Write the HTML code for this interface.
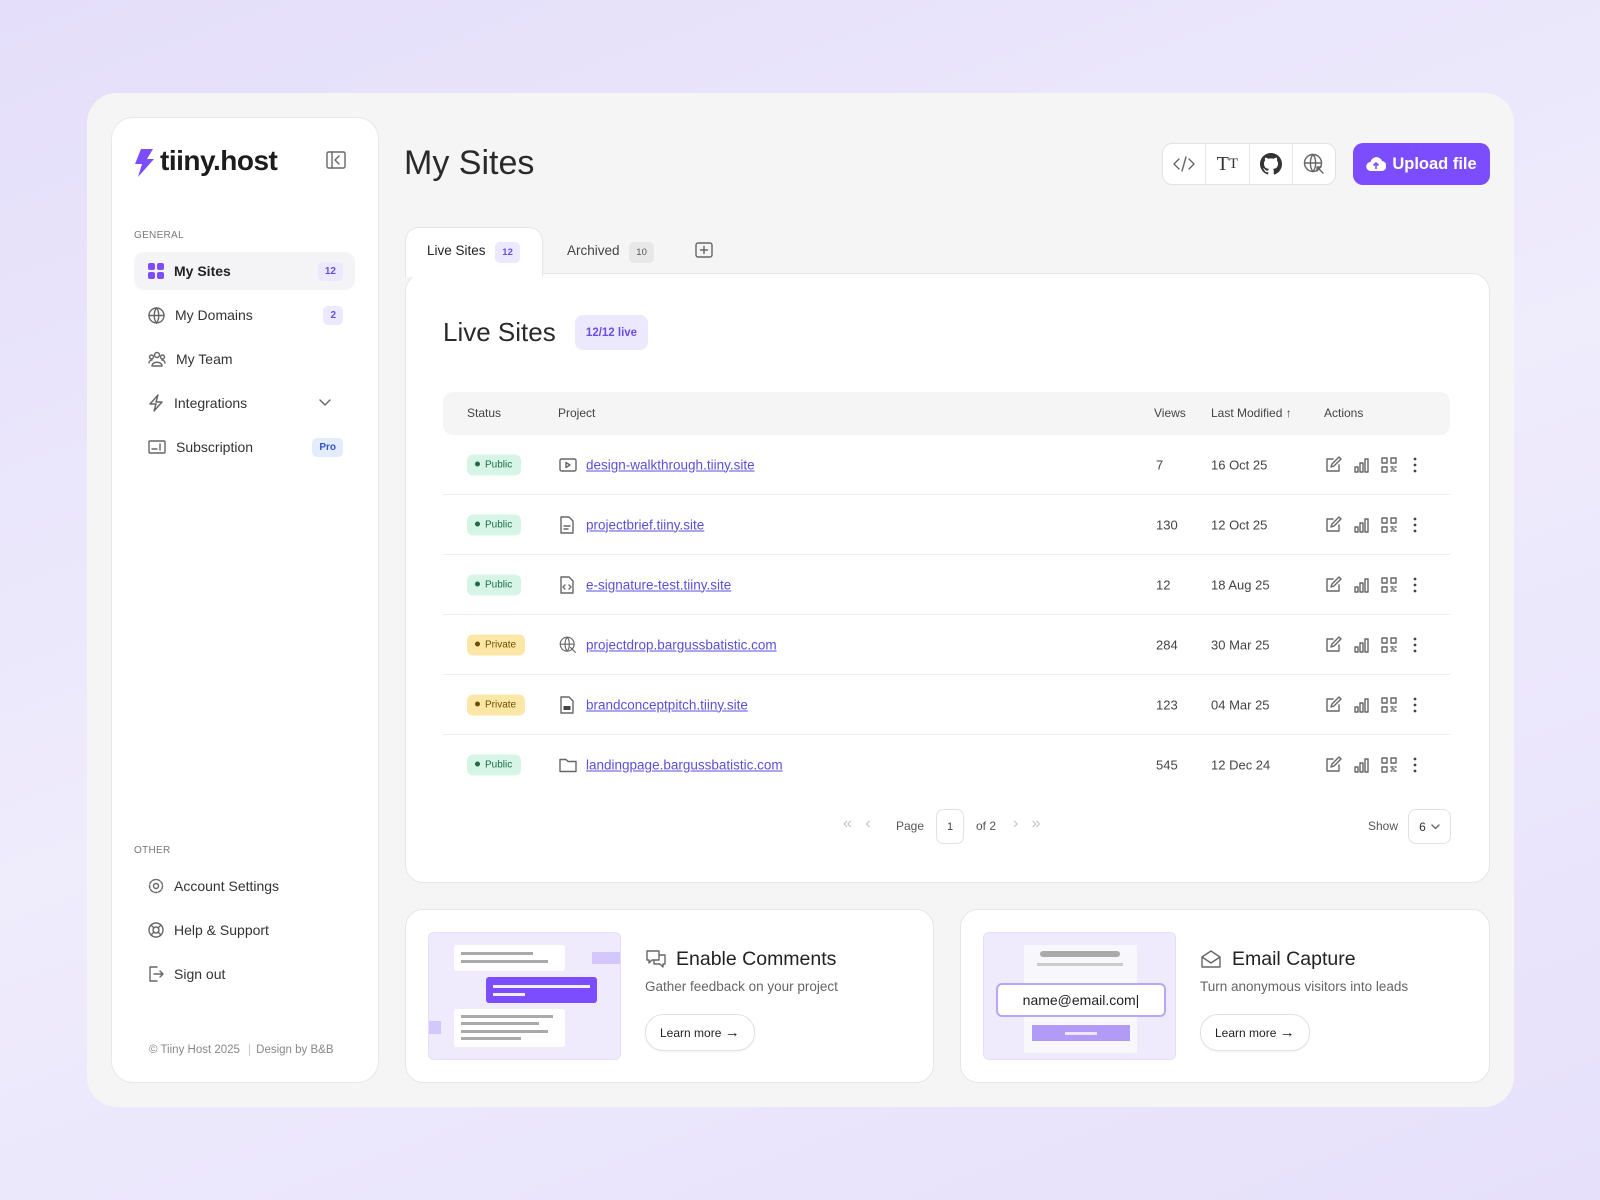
<!DOCTYPE html>
<html><head><meta charset="utf-8">
<style>
*{box-sizing:border-box;margin:0;padding:0}
body{width:1600px;height:1200px;overflow:hidden;background:linear-gradient(160deg,#e4defa 0%,#efecfc 50%,#e6e0fb 100%);font-family:"Liberation Sans",sans-serif;color:#222;position:relative}
.a{position:absolute}
.frame{left:87px;top:93px;width:1427px;height:1014px;background:#f5f5f5;border-radius:30px}
.side{left:111px;top:117px;width:268px;height:966px;background:#fff;border:1px solid #e8e8e8;border-radius:22px}
.nav{left:134px;width:221px;height:38px;display:flex;align-items:center;font-size:14px;color:#333;padding-left:14px;border-radius:10px}
.nav svg{margin-right:10px}
.cnt{position:absolute;right:12px;top:10px;background:#ece8fd;color:#6a4fe0;font-size:10px;border-radius:5px;padding:4px 7px;font-weight:bold}
.lbl{font-size:10px;color:#777;letter-spacing:.3px}
.ic{stroke:#666;fill:none;stroke-width:1.4;stroke-linecap:round;stroke-linejoin:round}
.card{background:#fff;border:1px solid #e6e6e6;border-radius:18px}
.row{left:443px;width:1007px;height:60px;border-bottom:1px solid #efefef}
.row>*{position:absolute;top:50%;transform:translateY(-50%)}
.pub{left:24px;background:#d7f5e6;color:#1d6b48;font-size:10px;padding:5px 9px 5px 8px;border-radius:6px}
.pri{left:24px;background:#fde7a6;color:#6d4f00;font-size:10px;padding:5px 9px 5px 8px;border-radius:6px}
.pub:before,.pri:before{content:"";display:inline-block;width:5px;height:5px;border-radius:50%;background:currentColor;margin-right:5px;vertical-align:1px}
.lnk{left:143px;color:#5a4fd8;text-decoration:underline;font-size:13.5px}
.v{left:713px;font-size:13px;color:#444}
.d{left:768px;font-size:13px;color:#444}
.pi{left:116px}
.acts{left:881px;display:flex;gap:10px;align-items:center}
.th{font-size:12px;color:#444;top:406px}
.lm{background:#fff;border:1px solid #e2e2e2;border-radius:18px;font-size:12px;padding:9px 14px;color:#222;box-shadow:0 1px 2px rgba(0,0,0,.05)}
</style></head><body>
<div class="a frame"></div>
<div class="a side"></div>
<!-- logo -->
<svg class="a" style="left:133px;top:148px" width="22" height="30" viewBox="0 0 22 30"><path d="M8 1h12l-6 10h7L5 29l4-13H2z" fill="#7c4dff"/></svg>
<div class="a" style="left:160px;top:145px;font-size:28px;font-weight:bold;color:#1c1c1c;letter-spacing:-.5px">tiiny.host</div>
<svg class="a" style="left:326px;top:151px" width="20" height="18" viewBox="0 0 20 18"><rect x="1" y="1" width="18" height="16" rx="1.5" class="ic" stroke="#333"/><path d="M6 1v16M13 5l-4 4 4 4" class="ic" stroke="#333"/></svg>
<div class="a lbl" style="left:134px;top:230px">GENERAL</div>
<div class="a nav" style="top:252px;background:#f4f4f6;font-weight:bold;color:#222"><svg width="16" height="16"><rect x="0" y="0" width="7" height="7" rx="2" fill="#7c4dff"/><rect x="9" y="0" width="7" height="7" rx="2" fill="#7c4dff"/><rect x="0" y="9" width="7" height="7" rx="2" fill="#7c4dff"/><rect x="9" y="9" width="7" height="7" rx="2" fill="#7c4dff"/></svg>My Sites<span class="cnt">12</span></div>
<div class="a nav" style="top:296px"><svg width="17" height="17" viewBox="0 0 17 17"><circle cx="8.5" cy="8.5" r="7.5" class="ic"/><path d="M1 8.5h15M8.5 1c-3 3.5-3 11.5 0 15M8.5 1c3 3.5 3 11.5 0 15" class="ic"/></svg>My Domains<span class="cnt">2</span></div>
<div class="a nav" style="top:340px"><svg width="18" height="16" viewBox="0 0 18 16"><circle cx="9" cy="4" r="2.5" class="ic"/><circle cx="3.5" cy="6" r="2" class="ic"/><circle cx="14.5" cy="6" r="2" class="ic"/><path d="M4 15c0-5 10-5 10 0zM1 12c0-2 2-3 3-3M17 12c0-2-2-3-3-3" class="ic"/></svg>My Team</div>
<div class="a nav" style="top:384px"><svg width="16" height="18" viewBox="0 0 16 18"><path d="M10 1L2 10h6l-2 7 8-9H8z" class="ic"/></svg>Integrations<svg style="position:absolute;right:14px" width="12" height="8"><path d="M1 1l5 5 5-5" class="ic"/></svg></div>
<div class="a nav" style="top:428px"><svg width="18" height="14" viewBox="0 0 18 14"><rect x="1" y="1" width="16" height="12" rx="1" class="ic"/><path d="M4 9h5M12 4v6" class="ic"/></svg>Subscription<span class="cnt" style="background:#e3ecfd;color:#3554c4">Pro</span></div>
<div class="a lbl" style="left:134px;top:845px">OTHER</div>
<div class="a nav" style="top:867px;left:134px"><svg width="16" height="16" viewBox="0 0 16 16"><circle cx="8" cy="8" r="2.5" class="ic"/><circle cx="8" cy="8" r="6.5" class="ic" stroke-dasharray="3 1.5"/></svg>Account Settings</div>
<div class="a nav" style="top:911px"><svg width="16" height="16" viewBox="0 0 16 16"><circle cx="8" cy="8" r="7" class="ic"/><circle cx="8" cy="8" r="3" class="ic"/><path d="M3 3l3 3M13 3l-3 3M3 13l3-3M13 13l-3-3" class="ic"/></svg>Help &amp; Support</div>
<div class="a nav" style="top:955px"><svg width="16" height="16" viewBox="0 0 16 16"><path d="M9 1H2v14h7M6 8h9M12 5l3 3-3 3" class="ic"/></svg>Sign out</div>
<div class="a" style="left:149px;top:1044px;font-size:11.5px;color:#888">© Tiiny Host 2025 <span style="border-left:1px solid #ccc;margin:0 6px"></span> Design by B&amp;B</div>

<!-- header -->
<div class="a" style="left:404px;top:144px;font-size:34px;color:#2a2a2a">My Sites</div>
<div class="a" style="left:1162px;top:143px;width:174px;height:42px;background:#fff;border:1px solid #e2e2e2;border-radius:10px;display:flex">
<div style="flex:1;border-right:1px solid #e6e6e6;display:flex;align-items:center;justify-content:center"><svg width="22" height="16"><path d="M6 3L1 8l5 5M16 3l5 5-5 5M13 1L9 15" class="ic" stroke="#333"/></svg></div>
<div style="flex:1;border-right:1px solid #e6e6e6;display:flex;align-items:center;justify-content:center;font-family:'Liberation Serif',serif;font-size:20px;color:#333">T<span style="font-size:15px">T</span></div>
<div style="flex:1;border-right:1px solid #e6e6e6;display:flex;align-items:center;justify-content:center"><svg width="22" height="22" viewBox="0 0 16 16"><path fill="#333" d="M8 0C3.58 0 0 3.58 0 8c0 3.540 2.290 6.530 5.470 7.590.4.07.55-.17.55-.38v-1.330c-2.230.48-2.700-1.070-2.700-1.070-.36-.92-.89-1.170-.89-1.170-.73-.5.05-.49.05-.49.8.06 1.230.82 1.230.82.72 1.220 1.870.87 2.330.66.07-.52.28-.87.51-1.070-1.780-.2-3.640-.89-3.640-3.950 0-.87.31-1.590.82-2.150-.08-.2-.36-1.020.08-2.120 0 0 .67-.21 2.200.82a7.600 7.600 0 014 0c1.530-1.040 2.200-.82 2.200-.82.44 1.100.16 1.920.08 2.120.51.56.82 1.270.82 2.150 0 3.070-1.870 3.750-3.650 3.950.29.25.54.73.54 1.480v2.200c0 .21.15.46.55.38A8 8 0 0016 8c0-4.420-3.580-8-8-8z"/></svg></div>
<div style="flex:1;display:flex;align-items:center;justify-content:center"><svg width="22" height="22" viewBox="0 0 22 22"><circle cx="10" cy="10" r="8.5" class="ic" stroke="#333"/><path d="M1.5 10h17M10 1.5c-3.5 4-3.5 13 0 17M10 1.5c3.5 4 3.5 13 0 17M14 14l6 6M14 14h4M14 14v4" class="ic" stroke="#333"/></svg></div>
</div>
<div class="a" style="left:1353px;top:143px;width:137px;height:42px;background:#7c4dff;border-radius:10px;color:#fff;font-size:16.5px;font-weight:bold;display:flex;align-items:center;justify-content:center;gap:6px"><svg width="20" height="16" viewBox="0 0 20 16"><path d="M5 15a4.5 4.5 0 01-.5-9A6 6 0 0116 5a4.5 4.5 0 01-1 10z" fill="#fff"/><path d="M10 13V7M7.5 9.5L10 7l2.5 2.5" stroke="#7c4dff" stroke-width="1.6" fill="none"/></svg>Upload file</div>

<!-- tabs -->
<div class="a card" style="left:405px;top:273px;width:1085px;height:610px"></div>
<div class="a" style="left:405px;top:227px;width:138px;height:50px;background:#fff;border:1px solid #e6e6e6;border-bottom:none;border-radius:14px 14px 0 0"></div>
<div class="a" style="left:427px;top:243px;font-size:13.5px;color:#222">Live Sites <span style="background:#ece8fd;color:#6a4fe0;font-size:9.5px;padding:5px 7px;border-radius:5px;margin-left:6px;font-weight:bold">12</span></div>
<div class="a" style="left:567px;top:243px;font-size:13.5px;color:#444">Archived <span style="background:#e8e8e8;color:#555;font-size:9.5px;padding:5px 7px;border-radius:5px;margin-left:6px">10</span></div>
<svg class="a" style="left:695px;top:242px" width="18" height="16"><rect x="1" y="1" width="16" height="14" rx="2" class="ic"/><path d="M9 4.5v7M5.5 8h7" class="ic"/></svg>

<div class="a" style="left:443px;top:317px;font-size:26px;color:#2a2a2a">Live Sites</div>
<div class="a" style="left:575px;top:315px;width:73px;height:35px;background:#ece8fd;color:#6a4fe0;font-size:11.5px;font-weight:bold;border-radius:8px;display:flex;align-items:center;justify-content:center">12/12 live</div>

<div class="a" style="left:443px;top:392px;width:1007px;height:43px;background:#f5f5f5;border-radius:10px"></div>
<div class="a th" style="left:467px">Status</div>
<div class="a th" style="left:558px">Project</div>
<div class="a th" style="left:1154px">Views</div>
<div class="a th" style="left:1211px">Last Modified ↑</div>
<div class="a th" style="left:1324px">Actions</div>

<!-- rows -->
<div class="a row" style="top:435px"><span class="pub">Public</span><svg class="pi" width="18" height="14"><rect x="1" y="1" width="16" height="12" rx="1.5" class="ic" stroke="#444"/><path d="M7 4.5v5l4-2.5z" class="ic" stroke="#444"/></svg><a class="lnk">design-walkthrough.tiiny.site</a><span class="v">7</span><span class="d">16 Oct 25</span><span class="acts">A</span></div>
<div class="a row" style="top:495px"><span class="pub">Public</span><svg class="pi" width="16" height="18"><path d="M2 1h8l4 4v12H2z" class="ic" stroke="#444"/><path d="M5 10h6M5 13h4" class="ic" stroke="#444"/></svg><a class="lnk">projectbrief.tiiny.site</a><span class="v">130</span><span class="d">12 Oct 25</span><span class="acts">A</span></div>
<div class="a row" style="top:555px"><span class="pub">Public</span><svg class="pi" width="16" height="18"><path d="M2 1h8l4 4v12H2z" class="ic" stroke="#444"/><path d="M6 9l-2 2 2 2M10 9l2 2-2 2" class="ic" stroke="#444"/></svg><a class="lnk">e-signature-test.tiiny.site</a><span class="v">12</span><span class="d">18 Aug 25</span><span class="acts">A</span></div>
<div class="a row" style="top:615px"><span class="pri">Private</span><svg class="pi" width="18" height="18" viewBox="0 0 22 22"><circle cx="10" cy="10" r="8.5" class="ic" stroke="#444"/><path d="M1.5 10h17M10 1.5c-3.5 4-3.5 13 0 17M10 1.5c3.5 4 3.5 13 0 17M14 14l6 6" class="ic" stroke="#444"/></svg><a class="lnk">projectdrop.bargussbatistic.com</a><span class="v">284</span><span class="d">30 Mar 25</span><span class="acts">A</span></div>
<div class="a row" style="top:675px"><span class="pri">Private</span><svg class="pi" width="16" height="18"><path d="M2 1h8l4 4v12H2z" class="ic" stroke="#444"/><rect x="4.5" y="10" width="7" height="4" fill="#444"/></svg><a class="lnk">brandconceptpitch.tiiny.site</a><span class="v">123</span><span class="d">04 Mar 25</span><span class="acts">A</span></div>
<div class="a row" style="top:735px;border:none"><span class="pub">Public</span><svg class="pi" width="18" height="15"><path d="M1 2h6l2 2h8v10H1z" class="ic" stroke="#444"/></svg><a class="lnk">landingpage.bargussbatistic.com</a><span class="v">545</span><span class="d">12 Dec 24</span><span class="acts">A</span></div>

<!-- pagination -->
<div class="a" style="left:843px;top:815px;font-size:16px;color:#c4c4c4">«&nbsp;&nbsp;&nbsp;‹</div>
<div class="a" style="left:896px;top:819px;font-size:12px;color:#555">Page</div>
<div class="a" style="left:936px;top:809px;width:28px;height:35px;border:1px solid #e2e2e2;border-radius:7px;font-size:11px;display:flex;align-items:center;justify-content:center;color:#444">1</div>
<div class="a" style="left:976px;top:819px;font-size:12px;color:#555">of 2</div>
<div class="a" style="left:1013px;top:815px;font-size:16px;color:#c4c4c4">›&nbsp;&nbsp;&nbsp;»</div>
<div class="a" style="left:1368px;top:819px;font-size:12px;color:#555">Show</div>
<div class="a" style="left:1408px;top:809px;width:43px;height:35px;border:1px solid #e2e2e2;border-radius:8px;font-size:12px;display:flex;align-items:center;justify-content:center;color:#333;gap:5px">6 <svg width="9" height="6"><path d="M1 1l3.5 3.5L8 1" class="ic" stroke="#333"/></svg></div>

<!-- bottom cards -->
<div class="a card" style="left:405px;top:909px;width:529px;height:174px"></div>
<div class="a card" style="left:960px;top:909px;width:530px;height:174px"></div>
<div class="a" style="left:428px;top:932px;width:193px;height:128px;background:#efebfd;border:1px solid #e4defa;border-radius:6px;overflow:hidden">
<div class="a" style="left:25px;top:12px;width:111px;height:26px;background:#fff;border-radius:3px"></div>
<div class="a" style="left:32px;top:19px;width:72px;height:3px;background:#aaa"></div><div class="a" style="left:32px;top:27px;width:87px;height:3px;background:#aaa"></div>
<div class="a" style="left:163px;top:19px;width:40px;height:12px;background:#d3c7fb"></div>
<div class="a" style="left:57px;top:44px;width:111px;height:26px;background:#7c4dff;border-radius:3px"></div>
<div class="a" style="left:64px;top:52px;width:97px;height:3px;background:#eee"></div><div class="a" style="left:64px;top:60px;width:32px;height:3px;background:#eee"></div>
<div class="a" style="left:0;top:88px;width:12px;height:13px;background:#d3c7fb"></div>
<div class="a" style="left:25px;top:76px;width:111px;height:38px;background:#fff;border-radius:3px"></div>
<div class="a" style="left:32px;top:82px;width:92px;height:3px;background:#aaa"></div><div class="a" style="left:32px;top:89px;width:78px;height:3px;background:#aaa"></div><div class="a" style="left:32px;top:97px;width:87px;height:3px;background:#aaa"></div><div class="a" style="left:32px;top:104px;width:60px;height:3px;background:#aaa"></div>
</div>
<svg class="a" style="left:645px;top:949px" width="22" height="20" viewBox="0 0 22 20"><path d="M2 2h12v9H7l-3 3v-3H2zM14 6h6v9h-2v3l-3-3h-6v-4" class="ic" stroke="#333"/></svg>
<div class="a" style="left:676px;top:948px;font-size:19.5px;color:#222">Enable Comments</div>
<div class="a" style="left:645px;top:979px;font-size:13.5px;color:#666">Gather feedback on your project</div>
<div class="a lm" style="left:645px;top:1014px">Learn more <span style="font-size:15px">→</span></div>

<div class="a" style="left:983px;top:932px;width:193px;height:128px;background:#efebfd;border:1px solid #e4defa;border-radius:6px;overflow:hidden">
<div class="a" style="left:40px;top:12px;width:113px;height:108px;background:#f8f7fc"></div>
<div class="a" style="left:56px;top:18px;width:80px;height:6px;background:#aaa;border-radius:3px"></div>
<div class="a" style="left:53px;top:30px;width:86px;height:3px;background:#ccc"></div>
<div class="a" style="left:12px;top:50px;width:170px;height:34px;background:#fff;border:2px solid #b9a6fb;border-radius:6px;font-size:14px;color:#222;display:flex;align-items:center;justify-content:center">name@email.com|</div>
<div class="a" style="left:48px;top:92px;width:98px;height:16px;background:#b29bf7"></div>
<div class="a" style="left:81px;top:99px;width:32px;height:3px;background:#ece6fd"></div>
</div>
<svg class="a" style="left:1200px;top:949px" width="22" height="20" viewBox="0 0 22 20"><path d="M2 8l9-6 9 6v10H2zM2 8l9 6 9-6" class="ic" stroke="#333"/></svg>
<div class="a" style="left:1232px;top:948px;font-size:19.5px;color:#222">Email Capture</div>
<div class="a" style="left:1200px;top:979px;font-size:13.5px;color:#666">Turn anonymous visitors into leads</div>
<div class="a lm" style="left:1200px;top:1014px">Learn more <span style="font-size:15px">→</span></div>

<script>
var s='<svg width="18" height="18" viewBox="0 0 18 18"><path d="M9 3H3v12h12V9" class="ic" stroke="#444"/><path d="M7 11l1-3 7-7 2 2-7 7z" class="ic" stroke="#444"/></svg><svg width="18" height="18" viewBox="0 0 18 18"><path d="M3 16v-5h3v5zM8 16V7h3v9zM13 16V3h3v13z" class="ic" stroke="#444"/></svg><svg width="18" height="18" viewBox="0 0 18 18"><rect x="2" y="2" width="5" height="5" class="ic" stroke="#444"/><rect x="11" y="2" width="5" height="5" class="ic" stroke="#444"/><rect x="2" y="11" width="5" height="5" class="ic" stroke="#444"/><path d="M11 11h2M15 11h1M12 13h2M11 15h1M14 15h2" class="ic" stroke="#444"/></svg><svg width="14" height="18" viewBox="0 0 14 18"><circle cx="7" cy="3" r="1.4" fill="#444"/><circle cx="7" cy="9" r="1.4" fill="#444"/><circle cx="7" cy="15" r="1.4" fill="#444"/></svg>';
document.querySelectorAll('.acts').forEach(function(e){e.innerHTML=s});
</script>
</body></html>
